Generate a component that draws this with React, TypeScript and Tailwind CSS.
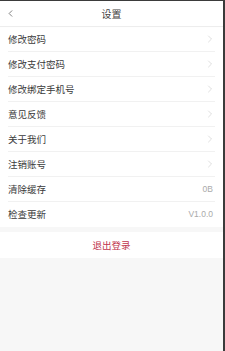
import { ChevronLeft, ChevronRight } from "lucide-react";

const ROWS: { label: string; value?: string }[] = [
  { label: "修改密码" },
  { label: "修改支付密码" },
  { label: "修改绑定手机号" },
  { label: "意见反馈" },
  { label: "关于我们" },
  { label: "注销账号" },
  { label: "清除缓存", value: "0B" },
  { label: "检查更新", value: "V1.0.0" },
];

export default function App() {
  return (
    <div
      className="flex h-[351px] w-[225px] bg-[#3b3b3b] pt-px"
      style={{ fontFamily: '"Noto Sans CJK SC", "Noto Sans", sans-serif' }}
    >
      <div className="flex w-[223px] flex-col bg-[#f7f7f7]">
        <header className="relative flex h-[25px] items-center justify-center bg-white shadow-[0_1px_1px_rgba(0,0,0,0.04)]">
          <ChevronLeft size={11} strokeWidth={1.6} className="absolute left-[5px] text-[#555]" />
          <span className="text-[10px] text-[#444]">设置</span>
        </header>
        <div className="mt-px bg-white">
          {ROWS.map((r, i) => (
            <div key={r.label} className="px-[8px]">
              <div
                className={
                  "flex h-[25px] items-center justify-between " +
                  (i < ROWS.length - 1 ? "border-b border-[#f1f1f1]" : "")
                }
              >
                <span className="text-[9.5px] text-[#3a3a3a]">{r.label}</span>
                {r.value ? (
                  <span className="mr-[2px] text-[8.5px] text-[#aaa]" style={{ fontFamily: '"Liberation Sans", sans-serif' }}>{r.value}</span>
                ) : (
                  <ChevronRight size={12} strokeWidth={1.3} className="mr-[-1px] text-[#cdcdcd]" />
                )}
              </div>
            </div>
          ))}
        </div>
        <div className="mt-[5px] flex h-[26px] items-center justify-center bg-white">
          <span className="text-[9.5px] text-[#c0334d]">退出登录</span>
        </div>
      </div>
    </div>
  );
}
